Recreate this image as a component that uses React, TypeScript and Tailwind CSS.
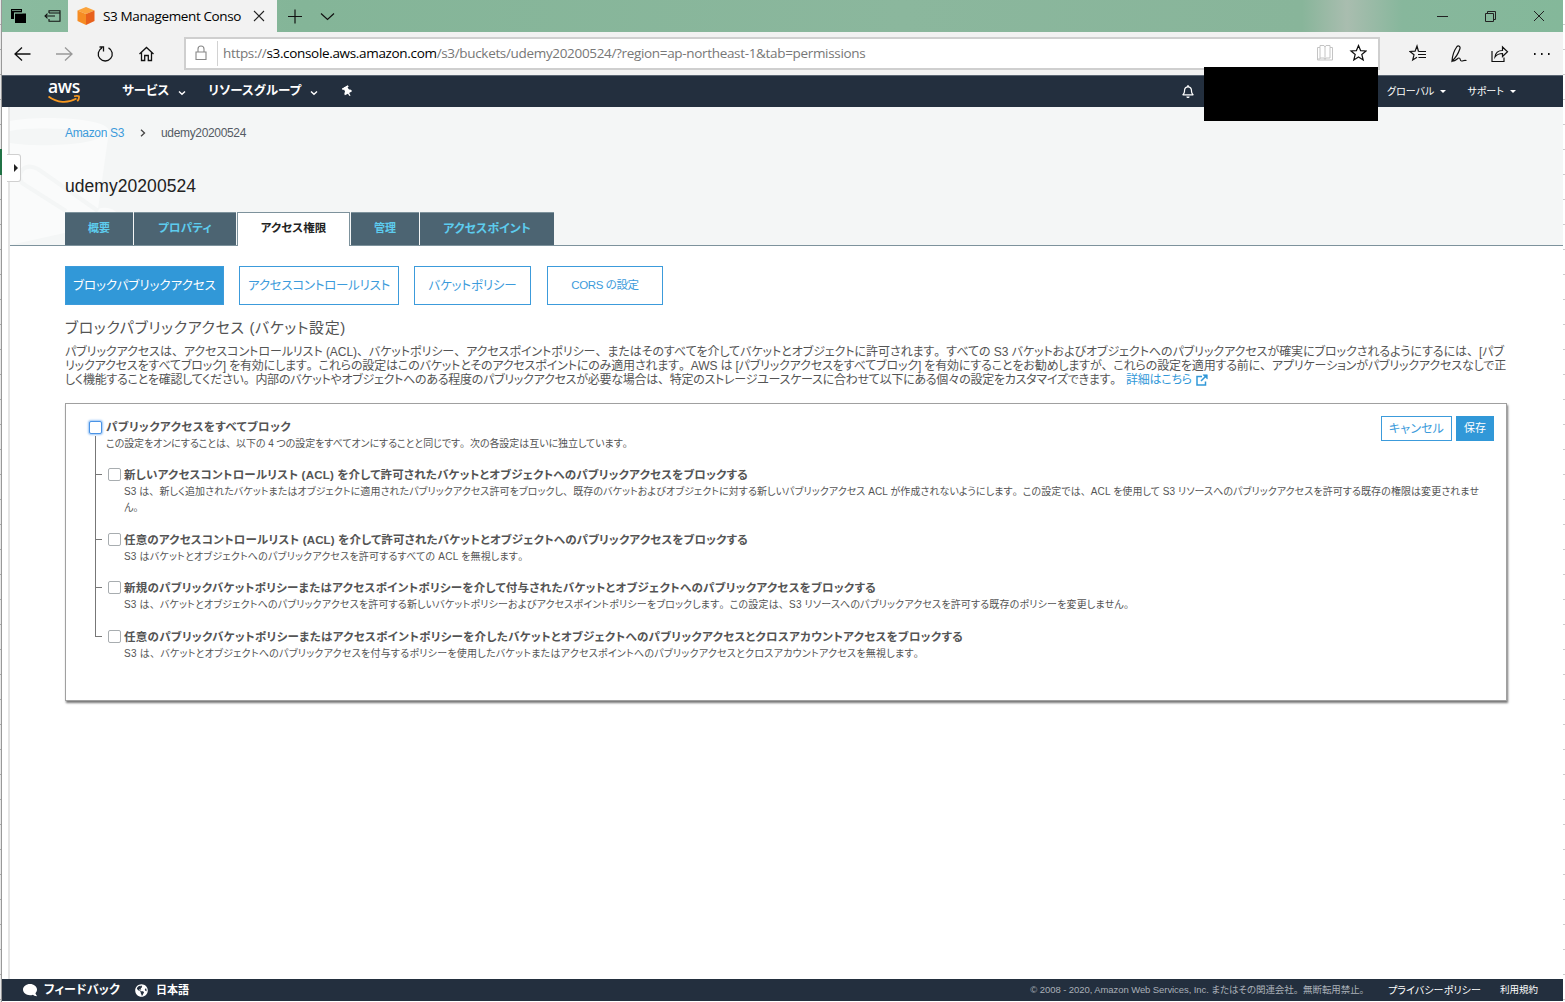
import React from "react";
import { FaComment, FaGlobeAmericas, FaRegBell, FaThumbtack } from "react-icons/fa";

type TProps = { className?: string; children: React.ReactNode };

// Kana are set proportionally; the full stop and comma keep their full width.
function T({ className = "", children }: TProps) {
  return (
    <span className={"inline-block whitespace-nowrap " + className}>
      {typeof children === "string"
        ? children.split(/([、。])/).map((s, i) =>
            i % 2 ? <span key={i} className="[font-feature-settings:normal]">{s}</span> : s,
          )
        : children}
    </span>
  );
}

function Caret({ className = "" }: { className?: string }) {
  return (
    <svg viewBox="0 0 8 6" className={"h-[6px] w-[8px] " + className} fill="none" stroke="#fff" strokeWidth="1.4">
      <path d="M1 1.5 4 4.3 7 1.5" />
    </svg>
  );
}

function TitleBar() {
  return (
    <div className="flex h-8 shrink-0 bg-[linear-gradient(90deg,#8abb9f_0px,#84b598_300px,#8bb79d_900px,#88b59a_1300px,#a9bdaf_1345px,#87b79c_1400px,#84b89a_1561px)]">
      <div className="flex w-[66px] items-center gap-[17px] pl-2">
        <svg viewBox="0 0 17 16" className="h-4 w-[17px]">
          <path d="M1 1h11v3.500H4V11H1z" fill="#000" />
          <path d="M5 5.500h11V15H5z" fill="#000" />
          <path d="M4.500 11V5h8M2 2.500h9" stroke="#8abb9f" strokeWidth=".7" fill="none" />
        </svg>
        <svg viewBox="0 0 17 12" className="h-3 w-[17px]" fill="none" stroke="#111" strokeWidth="1.1">
          <path d="M5 3V.8h11v10.4H5V9M5 3h11M1 6h10M3.5 3.6 1 6l2.500 2.400" />
        </svg>
      </div>
      <div className="flex w-[209px] items-center bg-[#f2f2f2] pl-[9px]">
        <svg viewBox="0 0 18 18" className="h-[18px] w-[18px]">
          <path d="M9 0 17.500 3.500 9 7 .5 3.500z" fill="#fba33c" />
          <path d="M.5 3.500 9 7v11L.5 14z" fill="#f68c23" />
          <path d="M17.500 3.500 9 7v11l8.500-4z" fill="#e8611c" />
        </svg>
        <T className="ml-2 font-['Open_Sans'] text-[13.5px] tracking-[-0.37px] text-black">S3 Management Conso</T>
        <svg viewBox="0 0 12 12" className="ml-auto mr-3 h-3 w-3" stroke="#222" strokeWidth="1.1">
          <path d="M1 1 11 11M11 1 1 11" />
        </svg>
      </div>
      <svg viewBox="0 0 50 16" className="mt-2 ml-[11px] h-4 w-[50px]" fill="none" stroke="#111" strokeWidth="1.200">
        <path d="M0 8.500h14M7 1.500v14M33 5.500l6.500 6L46 5.500" />
      </svg>
      <svg viewBox="0 0 108 12" className="mt-[10px] mr-[18px] ml-auto h-3 w-[108px]" fill="none" stroke="#222" strokeWidth="1">
        <path d="M0 6.500h11M48.500 3.500h8v8h-8zM50.500 3.500v-2h8v8h-2M97 1l10 10M107 1 97 11" />
      </svg>
    </div>
  );
}

function AddressBar() {
  return (
    <div className="flex h-[43px] shrink-0 items-center bg-[#f2f2f2]">
      <svg viewBox="0 0 146 20" className="ml-3 h-5 w-[146px]" fill="none" stroke="#111" strokeWidth="1.300">
        <path d="M1 10h15.500M8 3.500 1 10 8 16.500" />
        <path d="M42 10h15.500M51 3.500l7 6.500-7 6.500" stroke="#999" />
        <path d="M88 3.800A7 7 0 1 0 94.500 3.800M85.500 3h4v4.500" />
        <path d="M125.500 10 132.500 3.500l7 6.500M127.500 8.500v8h3.200v-5h3.600v5h3.200v-8" />
      </svg>
      <div className="mt-[-1px] ml-[24px] flex h-[33px] w-[1196px] items-center border-2 border-[#cfcfcf] bg-white">
        <svg viewBox="0 0 12 16" className="ml-[9px] h-4 w-3" fill="none" stroke="#888" strokeWidth="1.100">
          <path d="M1 7h10v7.500H1zM3 7V4a3 3 0 0 1 6 0v3" />
        </svg>
        <div className="ml-2.5 h-[25px] w-px bg-[#d2d2d2]" />
        <T className="mt-px ml-[5px] font-['Open_Sans'] text-[13.5px] tracking-[-0.33px] text-[#777]">
          https://<span className="text-black">s3.console.aws.amazon.com</span>/s3/buckets/udemy20200524/?region=ap-northeast-1&amp;tab=permissions
        </T>
        <svg viewBox="0 0 50 18" className="mr-[11px] ml-auto h-[18px] w-[50px]" fill="none">
          <path d="M.5 3.500H3V15H.5zM3 3.500V1.500h4L8 3l1-1.500h4v2h2.500V16H.5v-1M13 3.500V14H9l-1 1.500L7 14H3M8 3v12" stroke="#c4c4c4" />
          <path d="m41.500 1.500 2.100 5.100 5.400.4-4.200 3.500 1.400 5.500-4.700-3-4.700 3 1.400-5.500L34 7l5.400-.4z" stroke="#111" strokeWidth="1.200" />
        </svg>
      </div>
      <svg viewBox="0 0 142 20" className="mt-[-2px] ml-[29px] h-5 w-[142px]" fill="none" stroke="#111" strokeWidth="1.200">
        <path d="M9.500 8.500 8 3 6.100 8.100 1 8.500l4 3.300-1.300 5.200L8 14.300M9.500 8.500H17M9 11.500h8M9.500 14.500H17" />
        <path d="M43 18c.3-5 2.500-11 5-14.500 1.500-1.500 3.600.2 3 2C49.500 10 46.500 15 43 18zm0 0c4 .5 5-3 7-3s.5 3 2.500 3 1.500-1 5-.5" />
        <path d="M83 8v10.500h12v-4M86 14c.5-4 3.500-6.500 7.500-6.500V4l5 4.800-5 4.700v-3C90 10.500 87.500 12 86 14z" />
        <path d="M125 11h1.600M132 11h1.600M139 11h1.600" strokeWidth="1.800" />
      </svg>
    </div>
  );
}

function AwsNav() {
  return (
    <div className="flex h-8 shrink-0 items-center border-t border-[#5b6673] bg-[#232f3e] text-white">
      <div className="ml-[46px] flex h-6 w-8 flex-col items-center">
        <span className="mt-[-1px] font-['Open_Sans'] text-[17.5px] leading-[14px] font-semibold tracking-[-0.3px]">aws</span>
        <svg viewBox="0 0 32 9" className="mt-0.5 h-[9px] w-8" fill="none" stroke="#f7981f" strokeWidth="1.700">
          <path d="M.5 1.500C9 8 20 8.500 28.500 3.500M26 1.300c2-.5 4-.5 5 0 .3 1.500-.5 3.500-1.700 5" />
        </svg>
      </div>
      <T className="ml-[42px] text-[12.5px] font-bold">サービス</T>
      <Caret className="mt-0.5 ml-[9px]" />
      <T className="ml-[22px] text-[12.5px] font-bold tracking-[0.09px]">リソースグループ</T>
      <Caret className="mt-0.5 ml-[9px]" />
      <FaThumbtack className="ml-6 h-[11px] w-[11px] rotate-[-30deg]" />
      <FaRegBell className="mr-[9px] ml-auto h-[13px] w-[14px]" />
      <div className="relative z-20 mt-[-9px] mr-[9px] h-[54px] w-[174px] self-start bg-black" />
      <T className="text-[10px]">グローバル</T>
      <span className="ml-1.5 h-0 w-0 border-x-[3px] border-t-[3px] border-x-transparent border-t-white" />
      <T className="ml-[21px] text-[10px]">サポート</T>
      <span className="mr-[47px] ml-1.5 h-0 w-0 border-x-[3px] border-t-[3px] border-x-transparent border-t-white" />
    </div>
  );
}

const tab = "flex items-center justify-center border-t border-[#7d929c] pb-px font-bold";

function PageHeader() {
  return (
    <div className="relative flex h-[139px] shrink-0 flex-col border-b border-[#7d929c] bg-[#f4f6f6] pl-[55px]">
      <svg viewBox="0 0 130 138" className="absolute top-0 left-0 h-[138px] w-[130px]">
        <path d="M0 14C30 8 99 11 99 24L88 102C98 98 111 104 109 114L0 138z" fill="#fafbfb" />
        <path d="M0 24C20 19 90 22 90 29 90 37 30 41 0 36z" fill="#f4f6f6" />
        <path d="M88 104 28 62C14 55 6 66 12 76L56 104" fill="none" stroke="#f4f6f6" strokeWidth="4" />
      </svg>
      <div className="relative mt-[17px] flex h-[18px] items-center text-[12px] tracking-[-0.34px] text-[#545b64]">
        <T className="text-[#3c9bdb]">Amazon S3</T>
        <svg viewBox="0 0 6 8" className="ml-4 h-2 w-1.5" fill="none" stroke="#444" strokeWidth="1.300"><path d="M1 .8 4.500 4 1 7.200" /></svg>
        <T className="ml-[15px]">udemy20200524</T>
      </div>
      <div className="relative mt-[32px] flex h-6 items-center">
        <T className="text-[17.5px] tracking-[0.05px] text-[#222]">udemy20200524</T>
      </div>
      <div className="relative mt-auto mb-[-1px] flex h-[34px] gap-px text-[#5dccee]">
        <div className={tab + " w-[68px] border-b bg-[#4c6472] text-[11px]"}><T>概要</T></div>
        <div className={tab + " w-[102px] border-b bg-[#4c6472] text-[11.5px]"}><T className="tracking-[0.2px]">プロパティ</T></div>
        <div className={tab + " w-[113px] border-x bg-white text-[11.5px] text-[#222]"}><T className="tracking-[0.1px]">アクセス権限</T></div>
        <div className={tab + " w-[68px] border-b bg-[#4c6472] text-[11px]"}><T>管理</T></div>
        <div className={tab + " w-[134px] border-b bg-[#4c6472] text-[12px]"}><T>アクセスポイント</T></div>
      </div>
    </div>
  );
}

const sub = "flex h-[39px] items-center justify-center border border-[#3c9bdb] pt-px text-[12.5px]";

function Checkbox({ focus = false }: { focus?: boolean }) {
  return (
    <span className={"block h-[13px] w-[13px] shrink-0 rounded-[2px] border bg-white " + (focus ? "border-[#4a93e6] shadow-[0_0_2px_1px_#9cc6f5]" : "border-[#a8adb0]")} />
  );
}

const items = [
  {
    title: "新しいアクセスコントロールリスト (ACL) を介して許可されたバケットとオブジェクトへのパブリックアクセスをブロックする",
    titleStyle: "tracking-[0.2px]",
    lines: [
      "S3 は、新しく追加されたバケットまたはオブジェクトに適用されたパブリックアクセス許可をブロックし、既存のバケットおよびオブジェクトに対する新しいパブリックアクセス ACL が作成されないようにします。この設定では、ACL を使用して S3 リソースへのパブリックアクセスを許可する既存の権限は変更されませ",
      "ん。",
    ],
    lineStyle: "tracking-[0.079px]",
    height: "h-[65px]",
  },
  {
    title: "任意のアクセスコントロールリスト (ACL) を介して許可されたバケットとオブジェクトへのパブリックアクセスをブロックする",
    titleStyle: "tracking-[0.178px]",
    lines: ["S3 はバケットとオブジェクトへのパブリックアクセスを許可するすべての ACL を無視します。"],
    lineStyle: "tracking-[0.2px]",
    height: "h-[48px]",
  },
  {
    title: "新規のパブリックバケットポリシーまたはアクセスポイントポリシーを介して付与されたバケットとオブジェクトへのパブリックアクセスをブロックする",
    titleStyle: "tracking-[0.278px]",
    lines: [
      "S3 は、バケットとオブジェクトへのパブリックアクセスを許可する新しいバケットポリシーおよびアクセスポイントポリシーをブロックします。この設定は、S3 リソースへのパブリックアクセスを許可する既存のポリシーを変更しません。",
    ],
    lineStyle: "tracking-[0.172px]",
    height: "h-[49px]",
  },
  {
    title: "任意のパブリックバケットポリシーまたはアクセスポイントポリシーを介したバケットとオブジェクトへのパブリックアクセスとクロスアカウントアクセスをブロックする",
    titleStyle: "tracking-[0.304px]",
    lines: [
      "S3 は、バケットとオブジェクトへのパブリックアクセスを付与するポリシーを使用したバケットまたはアクセスポイントへのパブリックアクセスとクロスアカウントアクセスを無視します。",
    ],
    lineStyle: "tracking-[0.25px]",
    height: "h-[40px]",
  },
];

function Panel() {
  return (
    <div className="mt-[16px] h-[298px] w-[1442px] border border-[#a0a0a0] pt-[12px] pr-3 pl-[23px] shadow-[1px_2px_2px_#777]">
      <div className="flex">
        <div className="mt-[5px]"><Checkbox focus /></div>
        <div className="ml-[4px] flex flex-col items-start">
          <T className="mt-[2px] h-[18px] text-[11.5px] leading-[18px] font-bold tracking-[0.415px]">パブリックアクセスをすべてブロック</T>
          <T className="h-4 text-[10px] leading-4 tracking-[-0.06px]">この設定をオンにすることは、以下の 4 つの設定をすべてオンにすることと同じです。次の各設定は互いに独立しています。</T>
        </div>
        <div className="ml-auto flex h-[25px] gap-1 text-[12px]">
          <div className="flex w-[71px] items-center justify-center border border-[#3c9bdb] text-[#3c9bdb]"><T className="tracking-[0.12px]">キャンセル</T></div>
          <div className="flex w-[38px] items-center justify-center bg-[#3198d8] text-[11px] text-white"><T>保存</T></div>
        </div>
      </div>
      <div className="relative ml-[6px] flex flex-col pt-[10px]">
        <div className="absolute top-[-16px] left-0 h-[200px] w-px bg-[#777]" />
        {items.map((item) => (
          <div key={item.title} className={"flex " + item.height}>
            <div className="mt-[12px] h-px w-[7px] bg-[#777]" />
            <div className="mt-[6px] ml-[6px]"><Checkbox /></div>
            <div className="mt-[4px] ml-[3px] flex flex-col items-start">
              <T className={"h-[18px] text-[11.5px] leading-[18px] font-bold " + item.titleStyle}>{item.title}</T>
              {item.lines.map((line) => (
                <T key={line} className={"h-4 text-[10px] leading-4 " + item.lineStyle}>{line}</T>
              ))}
            </div>
          </div>
        ))}
      </div>
    </div>
  );
}

export default function App() {
  return (
    <div className="flex h-[1002px] w-[1565px] overflow-hidden bg-white font-['Liberation_Sans','Noto_Sans_CJK_JP',sans-serif] text-[#545454] [font-feature-settings:'palt']">
      <div className="flex w-0.5 flex-col border-r border-[#999] bg-[repeating-linear-gradient(180deg,#e8e8e8_0px,#e8e8e8_24px,#aaa_24px,#aaa_25px)]">
        <div className="mt-[149px] h-[26px] w-0.5 bg-[#217346]" />
      </div>
      <div className="flex w-[1561px] flex-col">
        <TitleBar />
        <AddressBar />
        <AwsNav />
        <div className="flex min-h-0 grow">
          <div className="relative w-2 border-r-2 border-[#e4e4e4]">
            <div className="absolute top-[47px] left-[5px] z-10 flex h-7 w-[14px] items-center justify-end rounded-r-[3px] border border-l-0 border-[#d0d0d0] bg-white pr-0.5">
              <span className="h-0 w-0 border-y-4 border-l-4 border-y-transparent border-l-[#222]" />
            </div>
          </div>
          <div className="flex grow flex-col">
            <PageHeader />
            <div className="flex flex-col pl-[55px]">
              <div className="mt-[20px] flex text-[#3c9bdb]">
                <div className={sub + " w-[159px] bg-[#3198d8] text-white"}><T>ブロックパブリックアクセス</T></div>
                <div className={sub + " ml-[15px] w-[160px]"}><T className="tracking-[-0.25px]">アクセスコントロールリスト</T></div>
                <div className={sub + " ml-[15px] w-[117px]"}><T className="tracking-[-0.145px]">バケットポリシー</T></div>
                <div className={sub + " ml-4 w-[116px]"}><T className="text-[11.5px] tracking-[-0.4px]">CORS の設定</T></div>
              </div>
              <div className="mt-[13px] flex h-5 items-center"><T className="text-[15px] tracking-[0.622px]">ブロックパブリックアクセス (バケット設定)</T></div>
              <div className="mt-[7px] flex flex-col items-start text-[12px] leading-[14px]">
                <T className="h-[14px] tracking-[-0.053px]">パブリックアクセスは、アクセスコントロールリスト (ACL)、バケットポリシー、アクセスポイントポリシー、またはそのすべてを介してバケットとオブジェクトに許可されます。すべての S3 バケットおよびオブジェクトへのパブリックアクセスが確実にブロックされるようにするには、[パブ</T>
                <T className="h-[14px] tracking-[-0.149px]">リックアクセスをすべてブロック] を有効にします。これらの設定はこのバケットとそのアクセスポイントにのみ適用されます。AWS は [パブリックアクセスをすべてブロック] を有効にすることをお勧めしますが、これらの設定を適用する前に、アプリケーションがパブリックアクセスなしで正</T>
                <div className="flex h-[14px] items-center">
                  <T className="tracking-[-0.252px]">しく機能することを確認してください。内部のバケットやオブジェクトへのある程度のパブリックアクセスが必要な場合は、特定のストレージユースケースに合わせて以下にある個々の設定をカスタマイズできます。</T>
                  <T className="ml-1 tracking-[-0.229px] text-[#3198d8]">詳細はこちら</T>
                  <svg viewBox="0 0 12 12" className="ml-1 h-3 w-3" fill="none" stroke="#3198d8" strokeWidth="1.500"><path d="M6 2.500H1v8.500h8.500V7.500M5 7l5-5" /><path d="M7 .8h4.300v4.300z" fill="#3198d8" strokeWidth=".6" /></svg>
                </div>
              </div>
              <Panel />
            </div>
          </div>
        </div>
        <div className="mb-px flex h-[22px] shrink-0 items-center bg-[#232f3e] text-white">
          <FaComment className="ml-[21px] h-[14px] w-[14px] -scale-x-100" />
          <T className="ml-[7px] text-[12px] font-bold tracking-[0.16px]">フィードバック</T>
          <FaGlobeAmericas className="ml-[15px] h-[13px] w-[13px]" />
          <T className="ml-2 text-[11px] font-bold">日本語</T>
          <T className="ml-auto text-[9.5px] tracking-[-0.08px] text-[#aab0b8]">© 2008 - 2020, Amazon Web Services, Inc. またはその関連会社。無断転用禁止。</T>
          <T className="ml-[19px] text-[10px] tracking-[0.1px]">プライバシーポリシー</T>
          <T className="mr-[25px] ml-[19px] text-[9.5px]">利用規約</T>
        </div>
      </div>
      <div className="w-0.5 bg-[repeating-linear-gradient(180deg,#fff_0px,#fff_24px,#ccc_24px,#ccc_25px)]" />
    </div>
  );
}
